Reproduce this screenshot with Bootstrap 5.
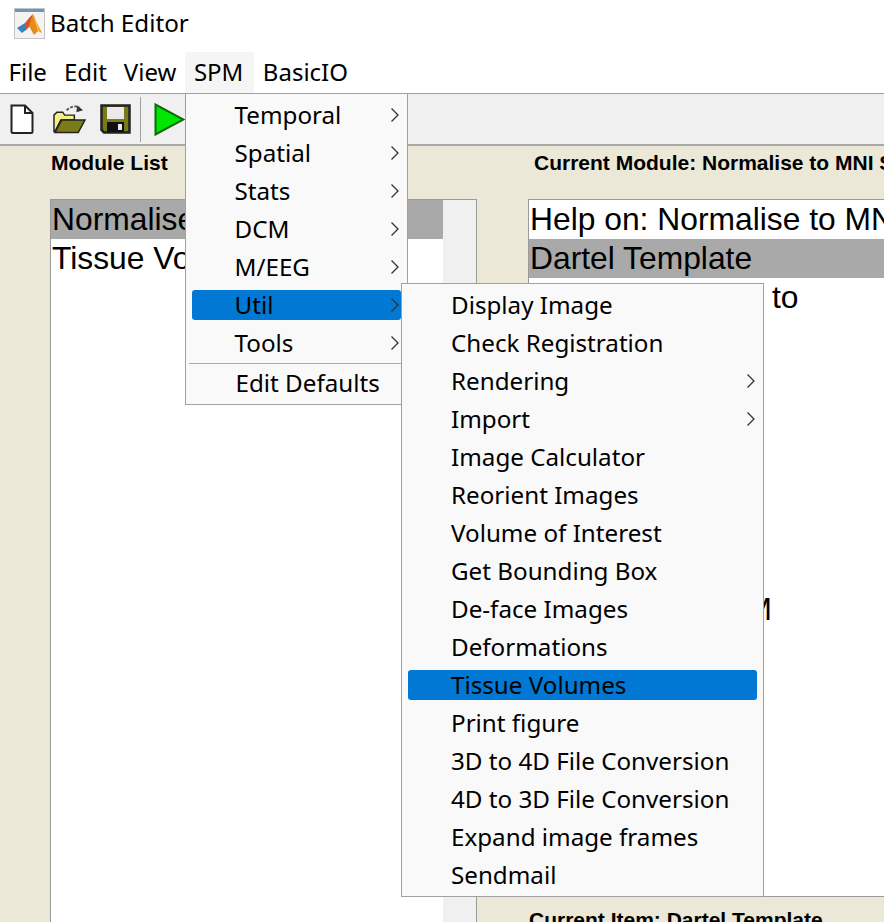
<!DOCTYPE html>
<html lang="en">
<head>
<meta charset="utf-8">
<title>Batch Editor</title>
<link rel="stylesheet" href="https://cdn.jsdelivr.net/npm/bootstrap@5.3.0/dist/css/bootstrap.min.css">
<style>
html,body{height:922px;overflow:hidden;background:#fff}
.app{width:884px;height:922px;position:relative;overflow:hidden;font-family:"Noto Sans",sans-serif;color:#000}
.titlebar{height:47px;padding-left:14px;gap:5px;font-size:24.2px}
.titlebar svg{margin-top:-1px}
.titlebar span{margin-top:-1px}
.menubar{height:46px;padding:5px 0 0 0}
.menubar .entry{padding:0 8.5px;height:41px;line-height:40px;white-space:nowrap;font-size:24px}
.menubar .entry.open{background:#f5f5f5;border-radius:3px 3px 0 0;padding:0 11px 0 9px}
.toolstrip{height:53px;background:#f0f0f0;border-top:1px solid #a0a0a0;border-bottom:2px solid #a9a9a9;padding-left:9px}
.toolstrip .tool{display:block;flex:none}
.tool-open{margin-left:18px}
.tool-save{margin-left:14px}
.toolstrip .sep{width:1px;height:45px;background:#a0a0a0;margin:0 13px 0 9px}
.panes{height:776px;background:#ebe8d8;overflow:hidden}
.pane-left{width:477px;flex:none;padding-left:50px}
.pane-right{flex:1;min-width:0;padding-left:51px;overflow:hidden}
.heading{font:700 21px/24px "Liberation Sans",sans-serif;height:53px;padding-top:5px;white-space:nowrap}
.pane-left .heading{padding-left:1px}
.pane-right .heading{padding-left:6px}
.listbox{background:#fff;border:1px solid #9a9a9a;font:31.8px/39px "Liberation Sans",sans-serif;white-space:nowrap;overflow:hidden}
.box-left{height:760px;border-bottom:0}
.box-right{height:698px;width:500px;border-right:0}
.rows{flex:1;min-width:0;overflow:hidden}
.rowline{height:39px;padding-left:1px;white-space:pre}
.rowline.sel{background:#a9a9a9}
.rowline.tight{word-spacing:-1px}
.scrolltrack{width:33px;flex:none;background:#f0f0f0}
.item-head{font:700 21px/24px "Liberation Sans",sans-serif;padding:11px 0 0 0;margin-left:1px;white-space:nowrap}
.popup{position:absolute;background:#f9f9f9;border:1px solid #a0a0a0;font-size:24.2px;padding:2px 6px 0;border-radius:0;min-width:0;display:block;margin:0;color:#000}
.popup .dropdown-item{height:38px;padding:0;display:flex;align-items:center;justify-content:space-between;color:#000;background:none;font-size:24.2px;line-height:30px;position:relative;white-space:nowrap;z-index:0}
.popup .dropdown-item.hot::before{content:"";position:absolute;left:0;right:0;top:4px;height:30px;background:#0078d4;border-radius:3px;z-index:-1}
.popup-main{left:185px;top:93px;width:223px;height:312px;z-index:5}
.popup-main .dropdown-item{padding-left:42.5px;padding-right:1px}
.popup-sub{left:401px;top:283px;width:363px;height:614px;z-index:6}
.popup-sub .dropdown-item{padding-left:43px;padding-right:1px}
.popup .divider-line{height:1px;background:#a9a9a9;margin:1px -6px 1px -3px;border:0;opacity:1}
.popup-main .lastrow{padding-left:43.5px}
.popup-main .lastrow span{margin-top:-2px}
</style>
</head>
<body>
<div class="app">
  <div class="titlebar d-flex align-items-center">
    <svg width="31" height="31" viewBox="0 0 31 31" aria-hidden="true">
      <rect x=".5" y=".5" width="30" height="30" fill="#f3f3f3" stroke="#c4c4c4"/>
      <rect x="1" y="1" width="29" height="3" fill="#6e94b8"/>
      <path d="M3 20 L11 15 L15 17 L12 22 L8 25Z" fill="#3a7fc0"/>
      <path d="M11 15 L15 10 L19 6 L16 18 L12 22Z" fill="#d9541e"/>
      <path d="M19 6 L22 13 L28 25 L24 23 L20 27 L15 18Z" fill="#e8891c"/>
      <path d="M19 6 L23 15 L26 23 L24 23 L21 14Z" fill="#f6c23a"/>
    </svg>
    <span>Batch Editor</span>
  </div>
  <div class="menubar d-flex align-items-start">
    <span class="entry">File</span>
    <span class="entry">Edit</span>
    <span class="entry">View</span>
    <span class="entry open">SPM</span>
    <span class="entry">BasicIO</span>
  </div>
  <div class="toolstrip d-flex align-items-center">
    <svg class="tool" width="26" height="32" viewBox="0 0 26 32" aria-hidden="true">
      <path d="M2.5 2.5 H16 L23.5 10 V28.5 Q23.5 30 22 30 H4 Q2.5 30 2.5 28.5Z" fill="#fff" stroke="#222" stroke-width="2"/>
      <path d="M16 2.5 V10 H23.5" fill="none" stroke="#222" stroke-width="2"/>
    </svg>
    <svg class="tool tool-open" width="33" height="32" viewBox="0 0 34 32" aria-hidden="true">
      <path d="M14 7 Q21 1 27 4" fill="none" stroke="#555" stroke-width="2" stroke-dasharray="3 1.5"/>
      <path d="M25 2 L31 7 L24 9Z" fill="#333"/>
      <path d="M1 12 L4 9 H10 L12 12 H22 V17 H8 L2 29 H1Z" fill="#f5f080" stroke="#222" stroke-width="1.5"/>
      <path d="M2 30 L9 17 H33 L26 30Z" fill="#7b7b18" stroke="#222" stroke-width="1.5"/>
    </svg>
    <svg class="tool tool-save" width="31" height="30" viewBox="0 0 31 30" aria-hidden="true">
      <path d="M1.5 1.5 H29.5 V28.5 H4 L1.5 26Z" fill="#7a7a18" stroke="#222" stroke-width="2.5"/>
      <rect x="7" y="3" width="17" height="12" fill="#e9e9e9"/>
      <rect x="7" y="18" width="17" height="10" fill="#111"/>
      <rect x="18" y="20" width="4" height="6" fill="#e9e9e9"/>
    </svg>
    <span class="sep"></span>
    <svg class="tool" width="31" height="33" viewBox="0 0 31 33" aria-hidden="true">
      <path d="M1.5 1.5 V31.5 L29.5 16.5Z" fill="#00e600" stroke="#0c6b0c" stroke-width="2"/>
    </svg>
  </div>
  <div class="panes d-flex">
    <div class="pane-left">
      <div class="heading">Module List</div>
      <div class="listbox box-left d-flex">
        <div class="rows">
          <div class="rowline sel">Normalise to MNI Space</div>
          <div class="rowline">Tissue Volumes</div>
        </div>
        <div class="scrolltrack"></div>
      </div>
    </div>
    <div class="pane-right">
      <div class="heading">Current Module: Normalise to MNI Space</div>
      <div class="listbox box-right">
        <div class="rowline">Help on: Normalise to MNI Space</div>
        <div class="rowline sel">Dartel Template</div>
        <div class="rowline tight">Select according to</div>
        <div class="rowline"></div>
        <div class="rowline"></div>
        <div class="rowline"></div>
        <div class="rowline"></div>
        <div class="rowline"></div>
        <div class="rowline"></div>
        <div class="rowline"></div>
        <div class="rowline">Gaussian FWHM</div>
      </div>
      <div class="item-head">Current Item: Dartel Template</div>
    </div>
  </div>

  <div class="dropdown-menu popup popup-main">
    <a class="dropdown-item" href="#"><span>Temporal</span><svg width="10" height="16" viewBox="0 0 10 16"><path d="M1.5 1.5 L8 8 L1.5 14.5" fill="none" stroke="#333" stroke-width="1.3"/></svg></a>
    <a class="dropdown-item" href="#"><span>Spatial</span><svg width="10" height="16" viewBox="0 0 10 16"><path d="M1.5 1.5 L8 8 L1.5 14.5" fill="none" stroke="#333" stroke-width="1.3"/></svg></a>
    <a class="dropdown-item" href="#"><span>Stats</span><svg width="10" height="16" viewBox="0 0 10 16"><path d="M1.5 1.5 L8 8 L1.5 14.5" fill="none" stroke="#333" stroke-width="1.3"/></svg></a>
    <a class="dropdown-item" href="#"><span>DCM</span><svg width="10" height="16" viewBox="0 0 10 16"><path d="M1.5 1.5 L8 8 L1.5 14.5" fill="none" stroke="#333" stroke-width="1.3"/></svg></a>
    <a class="dropdown-item" href="#"><span>M/EEG</span><svg width="10" height="16" viewBox="0 0 10 16"><path d="M1.5 1.5 L8 8 L1.5 14.5" fill="none" stroke="#333" stroke-width="1.3"/></svg></a>
    <a class="dropdown-item hot" href="#"><span>Util</span><svg width="10" height="16" viewBox="0 0 10 16"><path d="M1.5 1.5 L8 8 L1.5 14.5" fill="none" stroke="#333" stroke-width="1.3"/></svg></a>
    <a class="dropdown-item" href="#"><span>Tools</span><svg width="10" height="16" viewBox="0 0 10 16"><path d="M1.5 1.5 L8 8 L1.5 14.5" fill="none" stroke="#333" stroke-width="1.3"/></svg></a>
    <hr class="divider-line">
    <a class="dropdown-item lastrow" href="#"><span>Edit Defaults</span></a>
  </div>

  <div class="dropdown-menu popup popup-sub">
    <a class="dropdown-item" href="#"><span>Display Image</span></a>
    <a class="dropdown-item" href="#"><span>Check Registration</span></a>
    <a class="dropdown-item" href="#"><span>Rendering</span><svg width="10" height="16" viewBox="0 0 10 16"><path d="M1.5 1.5 L8 8 L1.5 14.5" fill="none" stroke="#333" stroke-width="1.3"/></svg></a>
    <a class="dropdown-item" href="#"><span>Import</span><svg width="10" height="16" viewBox="0 0 10 16"><path d="M1.5 1.5 L8 8 L1.5 14.5" fill="none" stroke="#333" stroke-width="1.3"/></svg></a>
    <a class="dropdown-item" href="#"><span>Image Calculator</span></a>
    <a class="dropdown-item" href="#"><span>Reorient Images</span></a>
    <a class="dropdown-item" href="#"><span>Volume of Interest</span></a>
    <a class="dropdown-item" href="#"><span>Get Bounding Box</span></a>
    <a class="dropdown-item" href="#"><span>De-face Images</span></a>
    <a class="dropdown-item" href="#"><span>Deformations</span></a>
    <a class="dropdown-item hot" href="#"><span>Tissue Volumes</span></a>
    <a class="dropdown-item" href="#"><span>Print figure</span></a>
    <a class="dropdown-item" href="#"><span>3D to 4D File Conversion</span></a>
    <a class="dropdown-item" href="#"><span>4D to 3D File Conversion</span></a>
    <a class="dropdown-item" href="#"><span>Expand image frames</span></a>
    <a class="dropdown-item" href="#"><span>Sendmail</span></a>
  </div>
</div>
<script src="https://cdn.jsdelivr.net/npm/bootstrap@5.3.0/dist/js/bootstrap.bundle.min.js"></script>
</body>
</html>
